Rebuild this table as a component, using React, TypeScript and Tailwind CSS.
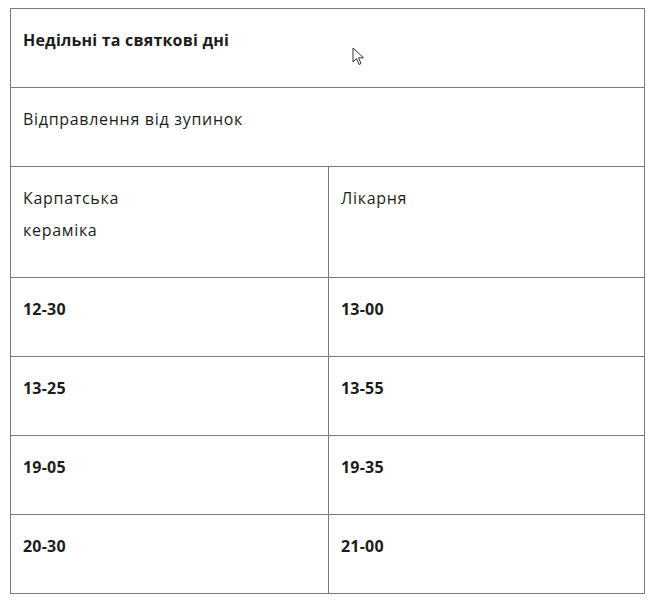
import React from "react";

const rows: [string, string][] = [
  ["12-30", "13-00"],
  ["13-25", "13-55"],
  ["19-05", "19-35"],
  ["20-30", "21-00"],
];

const cell = "border border-[#7a7a7a] pl-[12px] pt-[15px] pb-[31px]";

export default function App() {
  return (
    <div className="relative bg-white w-[670px] h-[604px] pt-[8px] pl-[10px]" style={{ fontFamily: '"Open Sans", "Noto Sans", sans-serif' }}>
      <table className="border-collapse w-[635px] text-[16px] leading-[32px] text-[#1c1c1c]">
        <tbody>
          <tr>
            <td colSpan={2} className={`${cell} font-bold tracking-[0.2px]`}>Недільні та святкові дні</td>
          </tr>
          <tr>
            <td colSpan={2} className={`${cell} tracking-[0.7px]`}>Відправлення від зупинок</td>
          </tr>
          <tr>
            <td className={`${cell} w-[318px] align-top tracking-[0.7px]`}>Карпатська<br />кераміка</td>
            <td className={`${cell} align-top tracking-[0.7px]`}>Лікарня</td>
          </tr>
          {rows.map(([a, b]) => (
            <tr key={a}>
              <td className={`${cell} font-bold tracking-[0.2px]`}>{a}</td>
              <td className={`${cell} font-bold tracking-[0.2px]`}>{b}</td>
            </tr>
          ))}
        </tbody>
      </table>
      <svg className="absolute left-[352px] top-[47px]" width="14" height="20" viewBox="0 0 14 20">
        <path d="M1 1 L1 15 L4.5 11.5 L7 17.5 L9 16.5 L6.5 10.8 L11.5 10.8 Z" fill="white" stroke="#333" strokeWidth="1" strokeLinejoin="round" />
      </svg>
    </div>
  );
}
